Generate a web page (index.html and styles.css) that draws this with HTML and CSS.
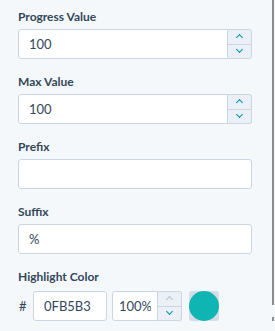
FILE: index.html
```html
<!DOCTYPE html>
<html lang="en">
<head>
    <meta charset="UTF-8">
    <meta name="viewport" content="width=device-width, initial-scale=1.0">
    <title>Progress Settings</title>
    <link rel="stylesheet" href="styles.css">
</head>
<body>
    <div class="page">
        <form class="panel">
            <div class="field">
                <label class="label">Progress Value</label>
                <div class="number">
                    <input class="input" type="text" value="100">
                    <div class="spin">
                        <span class="arrow up"></span>
                        <span class="arrow down"></span>
                    </div>
                </div>
            </div>
            <div class="field">
                <label class="label">Max Value</label>
                <div class="number">
                    <input class="input" type="text" value="100">
                    <div class="spin">
                        <span class="arrow up"></span>
                        <span class="arrow down"></span>
                    </div>
                </div>
            </div>
            <div class="field">
                <label class="label">Prefix</label>
                <input class="input" type="text" value="">
            </div>
            <div class="field">
                <label class="label">Suffix</label>
                <input class="input" type="text" value="%">
            </div>
            <div class="field">
                <label class="label">Highlight Color</label>
                <div class="color-row">
                    <span class="hash">#</span>
                    <input class="input hex" type="text" value="0FB5B3">
                    <div class="number opacity">
                        <input class="input" type="text" value="100%">
                        <div class="spin">
                            <span class="arrow up off"></span>
                            <span class="arrow down"></span>
                        </div>
                    </div>
                    <div class="swatch"><span class="dot"></span></div>
                </div>
            </div>
        </form>
        <div class="scroll">
            <span class="thumb"></span>
            <span class="tail"></span>
        </div>
    </div>
</body>
</html>
```

FILE: styles.css
```css
body {
    margin: 0;
    background-color: #f5f8fa;
    font-family: Lato, "Open Sans", sans-serif;
    color: #33475b;
}
.page {
    display: flex;
    height: 331px;
}
.panel {
    width: 234px;
    padding: 9px 0 0 18px;
}
.field {
    margin-bottom: 15px;
}
.label {
    display: block;
    font-size: 12px;
    font-weight: 700;
    line-height: 15px;
    margin-bottom: 5px;
}
.input {
    box-sizing: border-box;
    width: 100%;
    height: 30px;
    padding: 0 10px;
    border: 1px solid #cbd6e2;
    border-radius: 3px;
    background-color: #fff;
    font-family: inherit;
    font-size: 13px;
    color: #33475b;
    outline: none;
}
.number {
    display: flex;
}
.number .input {
    border-radius: 3px 0 0 3px;
}
.spin {
    display: flex;
    flex-direction: column;
    width: 23px;
    flex-shrink: 0;
    border: 1px solid #cbd6e2;
    border-left: none;
    border-radius: 0 3px 3px 0;
    background-color: #eaf0f6;
}
.arrow {
    flex: 1;
    display: flex;
    align-items: center;
    justify-content: center;
}
.arrow.up {
    border-bottom: 1px solid #cbd6e2;
}
.arrow::before {
    content: "";
    width: 4px;
    height: 4px;
    border-top: 1.5px solid #0091ae;
    border-left: 1.5px solid #0091ae;
}
.arrow.up::before {
    transform: translateY(1px) rotate(45deg);
}
.arrow.down::before {
    transform: translateY(-2px) rotate(-135deg);
}
.arrow.off::before {
    border-color: #b0c1d4;
}
.color-row {
    display: flex;
    align-items: center;
    margin-top: 7px;
}
.hash {
    width: 14px;
    padding-left: 1px;
    font-size: 13px;
}
.hex {
    width: 74px;
    margin-right: 5px;
}
.opacity {
    width: 70px;
    margin-right: 7px;
}
.opacity .input {
    padding: 0 6px;
}
.swatch {
    width: 30px;
    height: 30px;
    border-radius: 3px;
    background-color: #d5dde6;
}
.dot {
    display: block;
    width: 30px;
    height: 30px;
    border-radius: 50%;
    background-color: #0fb5b3;
}
.scroll {
    margin-left: 20px;
    width: 2px;
    display: flex;
    flex-direction: column;
}
.thumb {
    height: 305px;
    background-color: #8c8c8c;
}
.tail {
    margin-top: 12px;
    height: 4px;
    background-color: #8c8c8c;
}
```
